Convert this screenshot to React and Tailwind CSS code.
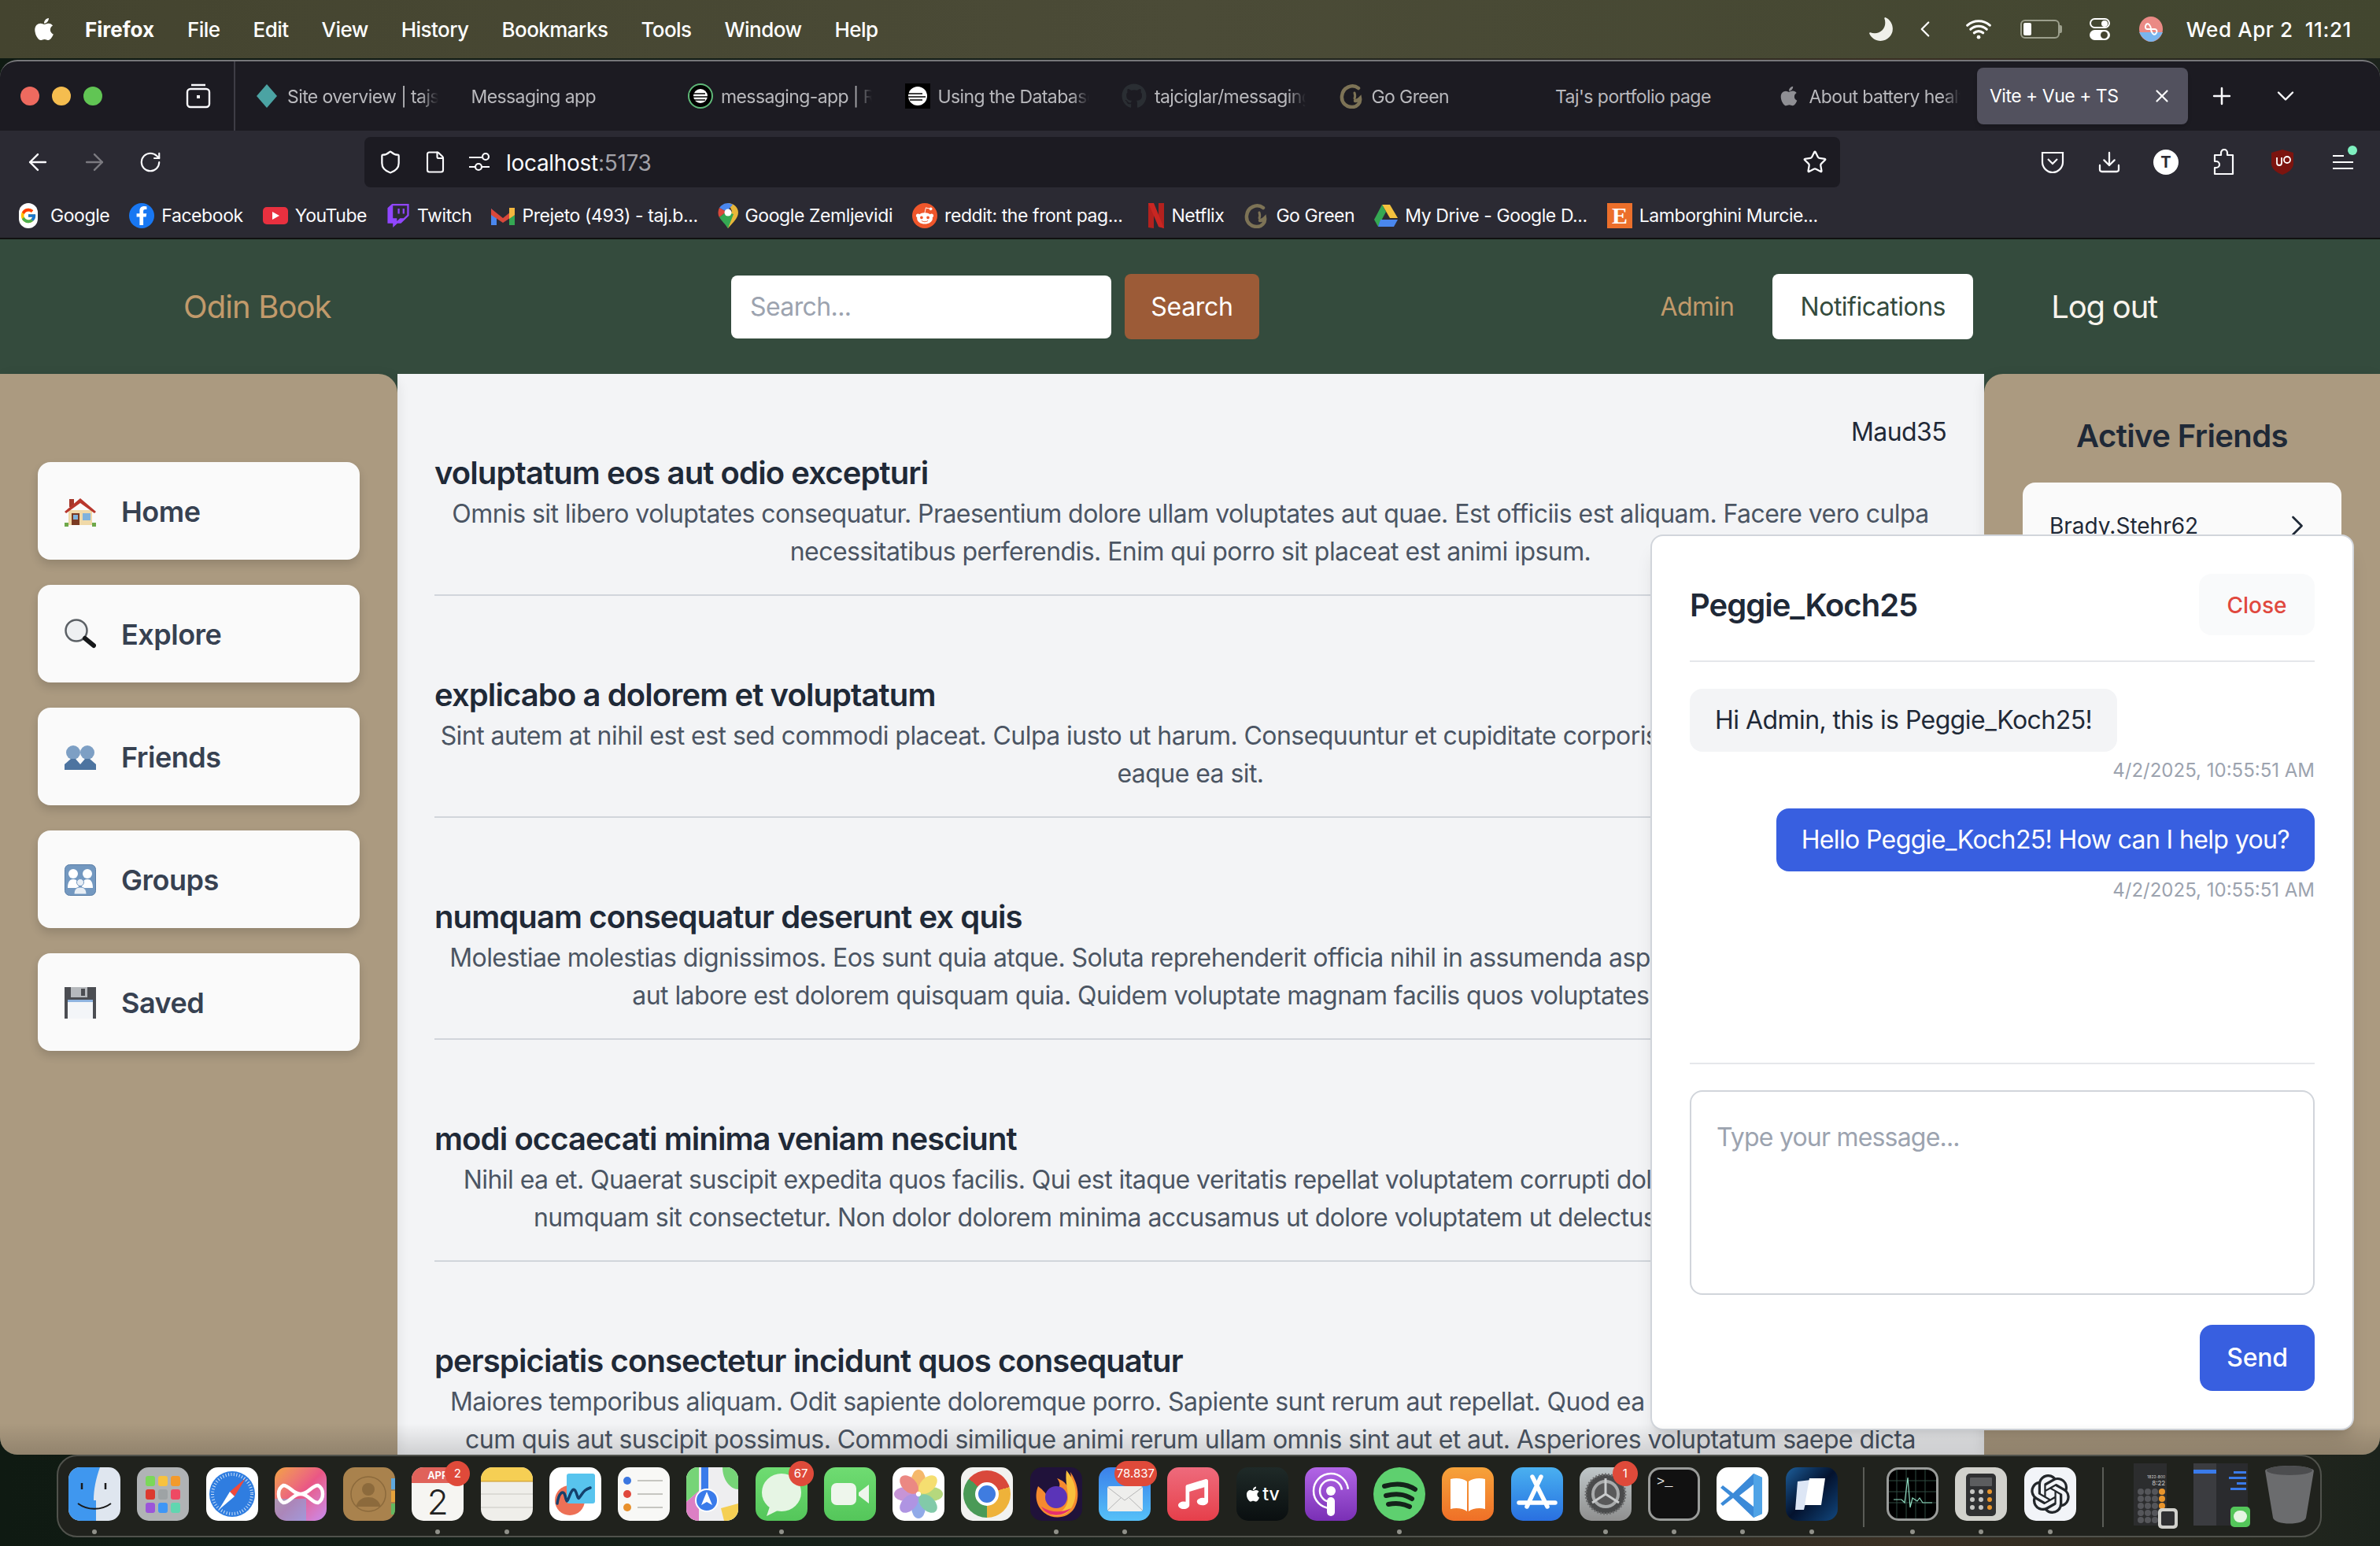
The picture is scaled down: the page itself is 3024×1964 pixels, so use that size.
import React from 'react';
import {
  ArrowLeft, ArrowRight, RotateCw, Shield, File, Star, Download, Plus, ChevronDown, ChevronLeft, ChevronRight, X,
} from 'lucide-react';
import { FaApple, FaGithub, FaFacebookF, FaRedditAlien, FaTwitch, FaMusic } from 'react-icons/fa';
import { FcGoogle } from 'react-icons/fc';
import { IoMoon, IoWifi } from 'react-icons/io5';
import { SiOpenai } from 'react-icons/si';

const menus = ['File', 'Edit', 'View', 'History', 'Bookmarks', 'Tools', 'Window', 'Help'];

const GoGreenIcon = ({ size = 32 }) => (
  <svg width={size} height={size} viewBox="0 0 32 32" fill="none">
    <path d="M25 6C17 0 5 5 4 16c-1 9 6 14 13 14 6 0 11-5 10-11-2 2-4 3-6 3" stroke="#7d7356" strokeWidth="4.5" strokeLinecap="round" />
    <path d="M20 12c1 3 1 5 0 7" stroke="#7d7356" strokeWidth="3" strokeLinecap="round" />
  </svg>
);

const StripeCircle = ({ square }) => (
  <svg width="32" height="32" viewBox="0 0 32 32">
    {square ? <rect width="32" height="32" fill="#000" /> : <circle cx="16" cy="16" r="15" fill="#000" stroke="#5fb878" strokeWidth="2" />}
    <circle cx="16" cy="16" r={square ? 12 : 9} fill="#fff" />
    <path d="M2 13h20M2 17h24M6 21h16" stroke="#000" strokeWidth="1.6" />
  </svg>
);

const tabs = [
  { title: 'Site overview | tajs-portfolio', w: 'w-[275.5px]', icon: <svg width="28" height="32" viewBox="0 0 28 32"><path d="M14 1l13 15-13 15L1 16z" fill="#4ba3a3" /></svg> },
  { title: 'Messaging app', w: 'w-[275.5px]' },
  { title: 'messaging-app | Railway', w: 'w-[275.5px]', icon: <StripeCircle /> },
  { title: 'Using the Database', w: 'w-[275.5px]', icon: <StripeCircle square /> },
  { title: 'tajciglar/messaging-app', w: 'w-[275.5px]', icon: <FaGithub size={32} color="#2a2e33" /> },
  { title: 'Go Green', w: 'w-[275.5px]', icon: <GoGreenIcon /> },
  { title: "Taj's portfolio page", w: 'w-[275.5px]', full: true },
  { title: 'About battery health', w: 'w-[260.5px] pl-[5px]', icon: <FaApple size={28} color="#8f8f94" /> },
];

const bookmarks = [
  { title: 'Google', icon: <span className="flex h-[32px] w-[31px] items-center justify-start"><span className="flex h-[32px] w-[24px] items-center justify-center rounded-full bg-white"><FcGoogle size={22} /></span></span> },
  { title: 'Facebook', icon: <span className="flex h-[32px] w-[32px] items-center justify-center rounded-full bg-[#1877f2]"><FaFacebookF size={24} color="#fff" /></span> },
  { title: 'YouTube', icon: <svg width="32" height="22" viewBox="0 0 32 22"><rect width="32" height="22" rx="5" fill="#e9303f" /><path d="M12 6l9 5-9 5z" fill="#fff" /></svg> },
  { title: 'Twitch', icon: <FaTwitch size={30} color="#9146ff" /> },
  { title: 'Prejeto (493) - taj.b...', icon: <svg width="30" height="24" viewBox="0 0 30 24"><path d="M0 3v21h7V10z" fill="#4a87ee" /><path d="M30 3v21h-7V10z" fill="#35a853" /><path d="M0 3l15 12L30 3v8L15 21 0 11z" fill="#d9483b" /><path d="M23 2l7 0v9l-7 5z" fill="#f4b73f" /></svg> },
  { title: 'Google Zemljevidi', icon: <svg width="26" height="32" viewBox="0 0 26 32"><path d="M13 0c7 0 13 5 13 12 0 4-2 7-5 11l-8 9-2-3 7-19z" fill="#e8b73a" /><path d="M13 0C8 0 4 3 2 6l9 5 8-9c-2-1-4-2-6-2z" fill="#4a87ee" /><path d="M2 6C0 10 0 15 2 18l9-7z" fill="#d9483b" /><path d="M2 18c3 5 7 8 11 14l7-18-9-3z" fill="#35a853" /><circle cx="13" cy="12" r="4.5" fill="#fff" /></svg> },
  { title: 'reddit: the front pag...', icon: <span className="flex h-[32px] w-[32px] items-center justify-center rounded-full bg-[#f0562b]"><FaRedditAlien size={24} color="#fff" /></span> },
  { title: 'Netflix', icon: <svg className="ml-[8px]" width="20" height="32" viewBox="0 0 20 32"><path d="M0 0h7v32l-7-1z" fill="#b3211e" /><path d="M13 0h7v32l-7-2z" fill="#b3211e" /><path d="M0 0h7l13 32-7-2z" fill="#c92622" /></svg> },
  { title: 'Go Green', icon: <GoGreenIcon /> },
  { title: 'My Drive - Google D...', icon: <svg width="30" height="28" viewBox="0 0 30 28"><path d="M10 0h10l10 17H20z" fill="#f4c23e" /><path d="M10 0l5 9-10 19L0 19z" fill="#35a853" /><path d="M8 19h22l-5 9H5z" fill="#4a87ee" /></svg> },
  { title: 'Lamborghini Murcie...', icon: <span className="flex h-[32px] w-[32px] items-center justify-center bg-[#ec6f2b] font-['Liberation_Serif',serif] text-[30px] leading-none font-bold text-white">E</span> },
];

const posts = [
  { title: 'voluptatum eos aut odio excepturi', lines: ['Omnis sit libero voluptates consequatur. Praesentium dolore ullam voluptates aut quae. Est officiis est aliquam. Facere vero culpa', 'necessitatibus perferendis. Enim qui porro sit placeat est animi ipsum.'] },
  { title: 'explicabo a dolorem et voluptatum', lines: ['Sint autem at nihil est est sed commodi placeat. Culpa iusto ut harum. Consequuntur et cupiditate corporis quia dolorem eum sit et.', 'eaque ea sit.'] },
  { title: 'numquam consequatur deserunt ex quis', lines: ['Molestiae molestias dignissimos. Eos sunt quia atque. Soluta reprehenderit officia nihil in assumenda aspernatur quia dolore sunt.', 'aut labore est dolorem quisquam quia. Quidem voluptate magnam facilis quos voluptates quidem.'] },
  { title: 'modi occaecati minima veniam nesciunt', lines: ['Nihil ea et. Quaerat suscipit expedita quos facilis. Qui est itaque veritatis repellat voluptatem corrupti dolorem sit ipsa dolor sint.', 'numquam sit consectetur. Non dolor dolorem minima accusamus ut dolore voluptatem ut delectus et ipsum dolore.'] },
  { title: 'perspiciatis consectetur incidunt quos consequatur', lines: ['Maiores temporibus aliquam. Odit sapiente doloremque porro. Sapiente sunt rerum aut repellat. Quod ea laudantium quia et vitae.', 'cum quis aut suscipit possimus. Commodi similique animi rerum ullam omnis sint aut et aut. Asperiores voluptatum saepe dicta'] },
];

const HouseEmoji = () => (
  <svg width="40" height="38" viewBox="0 0 40 38">
    <path d="M6 3h6v10H6z" fill="#a5382b" />
    <path d="M5 17h30v19H5z" fill="#f0d9a8" />
    <path d="M0 19L20 2l20 17-2 2L20 8 2 21z" fill="#b8372d" />
    <path d="M9 21h10v15H9z" fill="#7a3a22" />
    <path d="M11 23h6v6h-6zM23 21h10v9H23z" fill="#7fb2dc" />
    <path d="M0 33h5v5H0zM35 33h5v5h-5z" fill="#6ea84a" />
  </svg>
);
const SearchEmoji = () => (
  <svg width="40" height="40" viewBox="0 0 40 40">
    <circle cx="15" cy="15" r="13.5" fill="#eef0f2" stroke="#5c6166" strokeWidth="2.5" />
    <path d="M26 25l11 9" stroke="#16181a" strokeWidth="6" strokeLinecap="round" />
  </svg>
);
const FriendsEmoji = () => (
  <svg width="40" height="32" viewBox="0 0 40 32">
    <circle cx="11" cy="10" r="9" fill="#7d9fc4" />
    <circle cx="29" cy="10" r="9" fill="#7d9fc4" />
    <path d="M0 32v-7l8-7h6l6 7v7z" fill="#4d74a0" />
    <path d="M40 32v-7l-8-7h-6l-6 7v7z" fill="#4d74a0" />
  </svg>
);
const GroupsEmoji = () => (
  <svg width="40" height="40" viewBox="0 0 40 40">
    <rect x="0.5" y="0.5" width="39" height="39" rx="6" fill="#7398c0" stroke="#5a7ea6" />
    <circle cx="11" cy="12" r="6" fill="#fff" />
    <circle cx="29" cy="12" r="6" fill="#fff" />
    <path d="M4 30c0-8 3-11 7-11s7 3 7 11zM22 30c0-8 3-11 7-11s7 3 7 11z" fill="#fff" />
    <circle cx="20" cy="23" r="4.5" fill="#e8eef5" stroke="#7398c0" />
    <path d="M12 38c0-6 3-9 8-9s8 3 8 9z" fill="#e8eef5" stroke="#7398c0" />
  </svg>
);
const SavedEmoji = () => (
  <svg width="40" height="40" viewBox="0 0 40 40">
    <path d="M0 0h40v40H0z" fill="#4b4d52" />
    <path d="M8 0h21v13H8z" fill="#b6b9bd" />
    <path d="M21 2h5v9h-5z" fill="#4b4d52" />
    <path d="M4 16h32v24H4z" fill="#f3f5f8" />
    <path d="M4 16h32v3H4z" fill="#8fb4e0" />
  </svg>
);

const navItems = [
  { label: 'Home', icon: <HouseEmoji /> },
  { label: 'Explore', icon: <SearchEmoji /> },
  { label: 'Friends', icon: <FriendsEmoji /> },
  { label: 'Groups', icon: <GroupsEmoji /> },
  { label: 'Saved', icon: <SavedEmoji /> },
];

// one dock tile, 66x68, with optional running dot and badge
const Tile = ({ dot, badge, className = '', children }) => (
  <div className="relative h-[68px] w-[66px] shrink-0">
    <div className={`h-full w-full overflow-hidden rounded-[15px] ${className}`}>{children}</div>
    {badge && (
      <span className="absolute -top-[8px] -right-[8px] flex h-[32px] min-w-[32px] items-center justify-center rounded-full bg-[#df4a3a] px-[3px] text-[15px] text-white">
        {badge}
      </span>
    )}
    {dot && <span className="absolute top-[79px] left-[30px] h-[6px] w-[6px] rounded-full bg-[#8f9089]" />}
  </div>
);

const S = ({ children }) => <svg width="66" height="68" viewBox="0 0 66 68" fill="none">{children}</svg>;

const Dock = () => (
  <div className="absolute top-[1848px] left-[72px] flex h-[105px] w-[2878px] items-start gap-[21.27px] rounded-[26px] border-2 border-[#50524c] bg-[#20221d] pt-[14px] pl-[13px]">
    <Tile dot className="bg-[#dfe6ef]">
      <S>
        <path d="M0 0h40c-5 14-8 28-8 42h3v26H0z" fill="#3f97ef" />
        <path d="M17 20v8M47 20v8" stroke="#1a1a1a" strokeWidth="2.5" />
        <path d="M12 46c12 9 30 9 42 0" stroke="#1a1a1a" strokeWidth="2" />
      </S>
    </Tile>
    <Tile className="bg-[#b0b3b5]">
      <S>
        <rect x="11" y="11" width="12" height="13" rx="3" fill="#7bd859" /><rect x="27" y="11" width="12" height="13" rx="3" fill="#f7c23e" /><rect x="43" y="11" width="12" height="13" rx="3" fill="#f39a2b" />
        <rect x="11" y="28" width="12" height="13" rx="3" fill="#dc3a30" /><rect x="27" y="28" width="12" height="13" rx="3" fill="#9ea3a5" /><rect x="43" y="28" width="12" height="13" rx="3" fill="#ee4a63" />
        <rect x="11" y="45" width="12" height="13" rx="3" fill="#9b55d9" /><rect x="27" y="45" width="12" height="13" rx="3" fill="#3f96f5" /><rect x="43" y="45" width="12" height="13" rx="3" fill="#61d6b0" />
      </S>
    </Tile>
    <Tile className="bg-white">
      <S>
        <circle cx="33" cy="34" r="29" fill="#2f7de0" />
        <circle cx="33" cy="34" r="25" stroke="#cfe2f8" strokeWidth="4" strokeDasharray="1 2.5" />
        <path d="M50 14L36 37 30 31z" fill="#ee4a3c" />
        <path d="M16 54l14-23 6 6z" fill="#fff" />
      </S>
    </Tile>
    <Tile className="bg-linear-to-br from-[#f2a23c] via-[#ea5685] to-[#c68bf0]">
      <S>
        <rect x="0" y="40" width="40" height="28" fill="#6db6ee" opacity="0.5" />
        <path d="M22 12a12 10 0 0122 0c0 8-11 12-11 22s11 14 11 22a12 10 0 01-22 0c0-8 11-12 11-22S22 20 22 12z" transform="rotate(90 33 34)" stroke="#fff" strokeWidth="4.5" />
      </S>
    </Tile>
    <Tile className="bg-[#a9824d]">
      <S>
        <circle cx="32" cy="34" r="22" stroke="#8c6a3c" strokeWidth="1.5" />
        <circle cx="32" cy="28" r="8" fill="#8c6a3c" />
        <path d="M16 50c3-9 9-12 16-12s13 3 16 12z" fill="#8c6a3c" />
        <rect x="61" y="14" width="5" height="14" fill="#5fa8dd" /><rect x="61" y="30" width="5" height="14" fill="#e5a23b" /><rect x="61" y="46" width="5" height="14" fill="#62b860" />
      </S>
    </Tile>
    <Tile dot badge="2" className="flex flex-col bg-[#f6f5f2]">
      <div className="h-[20px] bg-[#e0625a] text-center text-[13px] leading-[20px] font-semibold text-white">APR</div>
      <div className="text-center text-[44px] leading-[48px] font-light text-[#222]">2</div>
    </Tile>
    <Tile dot className="bg-[#efeeea]">
      <S>
        <rect width="66" height="17" fill="#f6cf54" />
        <rect y="17" width="66" height="1.5" fill="#d8a93c" />
        <path d="M0 34h66M0 51h66" stroke="#d6d5d0" strokeWidth="1.5" />
      </S>
    </Tile>
    <Tile className="bg-white">
      <S>
        <circle cx="26" cy="42" r="19" fill="#ed7056" />
        <rect x="22" y="8" width="36" height="38" rx="3" fill="#58c4ee" />
        <path d="M10 46c2-14 8-18 10-10s2 10 5 2 6-14 9-6 2 10 6 4 6-8 12-10" stroke="#14406c" strokeWidth="3.5" strokeLinecap="round" />
      </S>
    </Tile>
    <Tile className="bg-[#f8f8f6]">
      <S>
        <circle cx="12" cy="17" r="5" fill="#3a76e0" /><circle cx="12" cy="34" r="5" fill="#e0483c" /><circle cx="12" cy="51" r="5" fill="#e8902c" />
        <path d="M25 17h32M25 34h32M25 51h32" stroke="#b5b5b0" strokeWidth="1.5" />
      </S>
    </Tile>
    <Tile className="bg-[#6fd26f]">
      <S>
        <path d="M0 0h66v68H0z" fill="#eeeef0" />
        <path d="M46 0h20v28C56 28 46 16 46 0z" fill="#76d477" />
        <path d="M0 0h16v30L0 44z" fill="#76d477" />
        <path d="M0 44l16-14 0 38H0z" fill="#dc7fc4" />
        <path d="M44 52l22-6v22H48z" fill="#f5cf53" />
        <path d="M19 0h9v34h-9z" fill="#3a7bea" />
        <circle cx="26" cy="42" r="14" fill="#3a7bea" stroke="#fff" strokeWidth="2" />
        <path d="M26 31l7 17-7-4-7 4z" fill="#fff" />
      </S>
    </Tile>
    <Tile dot badge="67" className="bg-linear-to-b from-[#6fdc72] to-[#54c65a]">
      <S>
        <ellipse cx="33" cy="32" rx="25" ry="24" fill="#e6f5e4" />
        <path d="M18 50l-4 12 14-7z" fill="#e6f5e4" />
      </S>
    </Tile>
    <Tile className="bg-linear-to-b from-[#6fdc72] to-[#54c65a]">
      <S>
        <rect x="9" y="20" width="32" height="28" rx="7" fill="#eef6ec" />
        <path d="M44 32l13-10v24l-13-10z" fill="#eef6ec" />
      </S>
    </Tile>
    <Tile className="bg-white">
      <S>
        <g opacity="0.75">
          <ellipse cx="33" cy="17" rx="9" ry="14" fill="#f2a13a" /><ellipse cx="33" cy="51" rx="9" ry="14" fill="#6d8ee0" /><ellipse cx="16" cy="34" rx="14" ry="9" fill="#b471c9" /><ellipse cx="50" cy="34" rx="14" ry="9" fill="#9ccb52" />
          <ellipse cx="21" cy="22" rx="9" ry="14" transform="rotate(-45 21 22)" fill="#e4605a" /><ellipse cx="45" cy="22" rx="9" ry="14" transform="rotate(45 45 22)" fill="#f2d340" /><ellipse cx="21" cy="46" rx="9" ry="14" transform="rotate(45 21 46)" fill="#9570d8" /><ellipse cx="45" cy="46" rx="9" ry="14" transform="rotate(-45 45 46)" fill="#58b98d" />
        </g>
      </S>
    </Tile>
    <Tile className="flex items-center justify-center bg-[#f2f2f0]">
      <div className="relative flex h-[60px] w-[60px] items-center justify-center rounded-full bg-[conic-gradient(from_-50deg,#d9483b_0_34%,#eeb23a_34%_64%,#4a9a57_64%_100%)]">
        <div className="h-[30px] w-[30px] rounded-full border-[4px] border-white bg-[#3f7ce0]" />
      </div>
    </Tile>
    <Tile dot className="bg-[#20123a]">
      <S>
        <path d="M10 24C6 34 6 48 18 58c12 9 30 7 38-6 7-12 6-30-5-46 2 10 0 16-3 20-2-6-8-10-14-12 5 6 4 12 0 14-5-2-12 0-14 6-3-4-5-6-10-10z" fill="#f58a2e" />
        <path d="M46 4c12 14 16 32 6 48-6 9-18 12-26 8 14 0 22-10 22-22 0-10-4-20-2-34z" fill="#f9c13c" />
        <circle cx="33" cy="38" r="14" fill="#5a34b8" />
        <path d="M14 50c8 14 28 14 38 2-12 6-26 6-38-2z" fill="#e6306e" />
      </S>
    </Tile>
    <Tile dot badge="78.837" className="bg-linear-to-b from-[#3c80ea] to-[#56c1f8]">
      <S>
        <rect x="11" y="24" width="45" height="32" rx="3" fill="#eeeeec" />
        <path d="M11 25l22 17 23-17M11 55l17-16M56 55L39 39" stroke="#b5b5b5" strokeWidth="1" />
      </S>
    </Tile>
    <Tile className="flex items-center justify-center bg-linear-to-b from-[#ee6a7c] to-[#e63e4a]">
      <FaMusic size={38} color="#fff" />
    </Tile>
    <Tile className="flex items-center justify-center gap-[1px] bg-linear-to-b from-[#1f2a28] to-[#0a0f10] text-white">
      <FaApple size={22} />
      <span className="text-[23px] leading-none font-medium">tv</span>
    </Tile>
    <Tile className="bg-linear-to-b from-[#b265e6] to-[#7a2fb5]">
      <S>
        <circle cx="33" cy="30" r="22" stroke="#fff" strokeWidth="2.5" strokeDasharray="100 38" strokeDashoffset="-35" />
        <circle cx="33" cy="30" r="14" stroke="#fff" strokeWidth="2.5" strokeDasharray="64 24" strokeDashoffset="-22" />
        <circle cx="33" cy="30" r="6" fill="#fff" />
        <rect x="28" y="38" width="10" height="24" rx="5" fill="#fff" />
      </S>
    </Tile>
    <Tile dot>
      <S>
        <ellipse cx="33" cy="34" rx="33" ry="34" fill="#5ed06f" />
        <path d="M14 24c14-4 28-3 39 4M16 36c12-3 24-2 33 4M19 47c10-2 19-1 27 3" stroke="#14231a" strokeWidth="6" strokeLinecap="round" />
      </S>
    </Tile>
    <Tile className="bg-linear-to-b from-[#f6a23a] to-[#ef6f27]">
      <S>
        <path d="M32 18c-5-4-14-5-21-3v38c7-2 16-1 21 3zM34 18c5-4 14-5 21-3v38c-7-2-16-1-21 3z" fill="#fff" />
      </S>
    </Tile>
    <Tile className="bg-linear-to-b from-[#4ab0f0] to-[#2a6fe0]">
      <S>
        <path d="M38 12L20 50M27 12l19 38M10 45h46" stroke="#fff" strokeWidth="5.5" strokeLinecap="round" />
      </S>
    </Tile>
    <Tile dot badge="1" className="bg-linear-to-b from-[#bfc7c9] to-[#8f8f8f]">
      <S>
        <circle cx="33" cy="34" r="25" fill="#4a4b4c" stroke="#6c6d6e" strokeWidth="3" strokeDasharray="2 2" />
        <circle cx="33" cy="34" r="18" fill="#a9abac" />
        <circle cx="33" cy="34" r="14" fill="#59595a" />
        <path d="M33 34V14M33 34l17 11M33 34L16 45" stroke="#c9cbcc" strokeWidth="3" />
      </S>
    </Tile>
    <Tile dot className="border-[3px] border-[#9a9c9a] bg-[#111]">
      <div className="pt-[7px] pl-[8px] font-['Liberation_Mono',monospace] text-[17px] leading-[17px] text-[#eee]">&gt;_</div>
    </Tile>
    <Tile dot className="bg-white">
      <S>
        <path d="M47 8l-26 25L8 23 5 26l12 10L5 46l3 3 13-10 26 25 11-5V13z" fill="#3b8ad8" />
        <path d="M47 8l11 5v46l-11 5z" fill="#4fa3e6" />
        <path d="M47 22L29 36l18 14z" fill="#fff" />
      </S>
    </Tile>
    <Tile dot className="bg-linear-to-br from-[#1d5f9c] via-[#04122e] to-[#12487f]">
      <S>
        <path d="M15 18l17-2-9 38H12z" fill="#dde6f5" />
        <path d="M30 14h20l-5 34H24z" fill="#fff" />
      </S>
    </Tile>
    <div className="mr-[7px] ml-[11px] h-[76px] w-[2px] shrink-0 bg-[#5a5c56]" />
    <Tile dot className="border-[3px] border-[#9a9c9a] bg-black">
      <S>
        <path d="M10 0v68M22 0v68M34 0v68M46 0v68M0 14h66M0 28h66M0 42h66" stroke="#2f4a40" strokeWidth="1" />
        <path d="M6 38h10l4 4 4-32 3 38 3-12 6 4 3-4 4 6h12" stroke="#8fdcc0" strokeWidth="1.2" />
      </S>
    </Tile>
    <Tile dot className="bg-[#d1d1cc]">
      <S>
        <rect x="14" y="8" width="38" height="54" rx="5" fill="#2f3032" />
        <rect x="19" y="13" width="28" height="11" rx="1" fill="#5c5d5f" />
        <g fill="#c5c5c2"><circle cx="22" cy="31" r="3" /><circle cx="33" cy="31" r="3" /><circle cx="22" cy="41" r="3" /><circle cx="33" cy="41" r="3" /><circle cx="22" cy="51" r="3" /><circle cx="33" cy="51" r="3" /></g>
        <g fill="#e8952c"><circle cx="44" cy="31" r="3" /><circle cx="44" cy="41" r="3" /><circle cx="44" cy="51" r="3" /></g>
      </S>
    </Tile>
    <Tile dot className="flex items-center justify-center bg-[#f2f4f8]">
      <SiOpenai size={50} color="#23272b" />
    </Tile>
    <div className="ml-[12px] h-[76px] w-[2px] shrink-0 bg-[#5a5c56]" />
    {/* minimised windows */}
    <div className="relative ml-[17px] -mt-[5px] flex h-[79px] w-[42px] shrink-0 flex-col items-end bg-[#2c2d2e] pt-[14px] pr-[2px] text-[#ccc]">
      <span className="text-[5px] leading-[6px]">1822-800</span>
      <span className="text-[8px] leading-[10px]">8:22</span>
      <div className="mt-[2px] grid grid-cols-4 gap-[1px]">
        {Array.from({ length: 20 }, (_, i) => (
          <span key={i} className={i % 4 === 3 ? 'h-[8px] w-[8px] rounded-full bg-[#e8952c]' : 'h-[8px] w-[8px] rounded-full bg-[#55565a]'} />
        ))}
      </div>
      <div className="absolute right-[-14px] bottom-[-4px] h-[26px] w-[25px] rounded-[5px] bg-[#d1d1cc] p-[4px]"><div className="h-full w-full rounded-[2px] bg-[#2f3032]" /></div>
    </div>
    <div className="relative ml-[12px] -mt-[5px] flex h-[79px] w-[69px] shrink-0 bg-[#2a2b2e]">
      <div className="w-[29px] bg-[#3b3c40] pt-[8px]"><div className="h-[5px] bg-[#3a7bea]" /></div>
      <div className="flex flex-1 flex-col items-end gap-[4px] pt-[10px] pr-[2px]">
        <span className="h-[3px] w-[16px] bg-[#3a7bea]" /><span className="h-[3px] w-[22px] bg-[#3a7bea]" /><span className="h-[3px] w-[12px] bg-[#3a7bea]" /><span className="h-[3px] w-[20px] bg-[#3a7bea]" />
      </div>
      <div className="absolute right-[-3px] bottom-[-2px] h-[26px] w-[25px] rounded-[5px] bg-[#54c65a]"><div className="mx-auto mt-[5px] h-[15px] w-[17px] rounded-full bg-[#e6f5e4]" /></div>
    </div>
    <div className="ml-[1px] -mt-[4px] shrink-0">
      <svg width="62" height="76" viewBox="0 0 62 76"><path d="M0 8C8 0 54 0 62 8L52 68c-2 10-40 10-42 0z" fill="#6b6c6e" /><ellipse cx="31" cy="8" rx="29" ry="6" fill="#4c4d4f" /></svg>
    </div>
  </div>
);

const Tab = ({ title, w, icon, full }) => (
  <div className={`flex h-[32px] shrink-0 items-center gap-[10px] ${w}`}>
    {icon && <span className="flex h-[32px] w-[32px] shrink-0 items-center justify-center">{icon}</span>}
    {full ? (
      <span className="pt-[2px] text-[23px] leading-[32px] tracking-[-0.55px] whitespace-nowrap text-[#b9b9bd]">{title}</span>
    ) : (
      <span className="w-[192px] overflow-hidden pt-[2px] text-[23px] leading-[32px] tracking-[-0.6px] whitespace-nowrap text-[#b9b9bd] [mask-image:linear-gradient(to_right,black_88%,transparent)]">
        {title}
      </span>
    )}
  </div>
);

export default function App() {
  return (
    <div className="relative h-[1964px] w-[3024px] overflow-hidden bg-[linear-gradient(90deg,#0f1a12,#16201a_40%,#2a2a22_65%,#3a3024_80%,#1c231c)] font-[Inter,sans-serif]">
      {/* macOS menu bar */}
      <div className="flex h-[74px] items-center bg-[linear-gradient(90deg,#44442f,#4b4b37_50%,#42462f)] pr-[36px] pl-[40px] text-[26px] text-white">
        <FaApple size={32} />
        <span className="ml-[36px] font-bold">Firefox</span>
        <div className="ml-[42px] flex gap-[42px] font-medium tracking-[-0.55px]">
          {menus.map((m) => <span key={m}>{m}</span>)}
        </div>
        <div className="ml-auto flex items-center">
          <IoMoon size={34} color="#f0f0ea" className="scale-x-[-1]" />
          <ChevronLeft size={34} strokeWidth={1.6} className="ml-[22px]" />
          <IoWifi size={38} className="ml-[32px]" />
          <div className="relative ml-[34px] flex h-[24px] w-[50px] items-center rounded-[6px] border-2 border-[#9c9f8c] p-[2px]">
            <div className="h-full w-[10px] rounded-[2px] bg-white" />
            <span className="absolute top-[5px] -right-[5px] h-[10px] w-[3px] rounded-r-[2px] bg-[#9c9f8c]" />
          </div>
          <div className="ml-[38px] flex flex-col gap-[2px]">
            <div className="flex h-[13px] w-[26px] items-center justify-end rounded-full border-2 border-white pr-[1px]"><span className="h-[8px] w-[8px] rounded-full bg-white" /></div>
            <div className="flex h-[13px] w-[26px] items-center rounded-full bg-white pl-[14px]"><span className="h-[9px] w-[9px] rounded-full bg-[#44442f]" /></div>
          </div>
          <svg className="ml-[37px]" width="30" height="32" viewBox="0 0 30 32" fill="none">
            <ellipse cx="15" cy="16" rx="15" ry="16" fill="#ea8a85" />
            <path d="M0 20c4 8 10 12 15 12s11-4 15-12z" fill="#79b5ee" />
            <path d="M9 10c3-3 6 3 6 6s3 9 6 6c3-3 1-6-1-6s-8 0-10 0-3-3-1-6z" stroke="#fff" strokeWidth="2" />
          </svg>
          <span className="ml-[30px] font-medium tracking-[0.6px] whitespace-pre">Wed Apr 2  11:21</span>
        </div>
      </div>

      {/* Firefox window */}
      <div className="mt-[2px] flex h-[1772px] flex-col overflow-hidden rounded-[22px] border-t-2 border-[#77777a] bg-[#1c1b22]">
        <div className="flex h-[88px] shrink-0 items-center pl-[26px]">
          <div className="flex gap-[16px]">
            <span className="h-[24px] w-[24px] rounded-full bg-[#ee6a5f]" />
            <span className="h-[24px] w-[24px] rounded-full bg-[#f5bd4f]" />
            <span className="h-[24px] w-[24px] rounded-full bg-[#61c554]" />
          </div>
          <svg className="ml-[106px]" width="32" height="32" viewBox="0 0 32 32" fill="none" stroke="#fbfbfe" strokeWidth="2.4"><rect x="2" y="7" width="28" height="23" rx="4" /><path d="M7 2h18" /><rect x="14" y="15" width="4" height="4" fill="#fbfbfe" stroke="none" /></svg>
          <span className="ml-[29px] h-full w-[2px] bg-[#3e3d46]" />
          <div className="ml-[24px] flex items-center">
            {tabs.map((t) => <Tab key={t.title} {...t} />)}
          </div>
          <div className="flex h-[72px] w-[268px] items-center rounded-[8px] bg-[#52515e] pr-[20px] pl-[16px] text-[23px] tracking-[-0.5px] text-white shadow-md">
            <span>Vite + Vue + TS</span>
            <X size={26} strokeWidth={2} className="ml-auto" />
          </div>
          <Plus size={34} strokeWidth={1.8} color="#fbfbfe" className="ml-[26px]" />
          <ChevronDown size={36} strokeWidth={1.6} color="#fbfbfe" className="ml-[46px]" />
        </div>

        {/* toolbar */}
        <div className="flex h-[72px] shrink-0 items-center bg-[#2b2a33] pt-[8px] text-[#fbfbfe]">
          <ArrowLeft size={34} strokeWidth={1.7} className="ml-[31px]" />
          <ArrowRight size={34} strokeWidth={1.7} className="ml-[38px] text-[#7b7a80]" />
          <RotateCw size={30} strokeWidth={1.7} className="ml-[39px]" />
          <div className="ml-[257px] flex h-[64px] w-[1875px] items-center rounded-[8px] bg-[#1c1b22] pr-[16px] pl-[17px]">
            <Shield size={32} strokeWidth={1.7} />
            <File size={30} strokeWidth={1.7} className="ml-[26px]" />
            {/* site permissions icon: two sliders */}
            <svg className="ml-[26px]" width="30" height="30" viewBox="0 0 30 30" fill="none" stroke="#fbfbfe" strokeWidth="2.2">
              <path d="M2 9h16M2 21h8M18 21h10" />
              <circle cx="23" cy="8" r="4" /><circle cx="14" cy="21" r="4" />
            </svg>
            <span className="ml-[19px] pt-[2px] text-[28px] tracking-[-0.3px]">localhost<span className="text-[#a3a2a8]">:5173</span></span>
            <Star size={32} strokeWidth={1.7} className="ml-auto" />
          </div>
          <svg className="ml-[255px]" width="30" height="32" viewBox="0 0 30 32" fill="none" stroke="#fbfbfe" strokeWidth="2.2"><path d="M2 4h26v12c0 7-6 13-13 13S2 23 2 16z" /><path d="M9 12l6 6 6-6" /></svg>
          <Download size={32} strokeWidth={1.7} className="ml-[41px]" />
          <span className="ml-[40px] flex h-[32px] w-[32px] items-center justify-center rounded-full bg-white text-[20px] font-bold text-[#2b2a33]">T</span>
          {/* extensions puzzle piece */}
          <svg className="ml-[43px]" width="28" height="34" viewBox="0 0 28 34" fill="none" stroke="#fbfbfe" strokeWidth="2.2" strokeLinejoin="round">
            <path d="M11 8V5a4 4 0 018 0v3h7v24H3v-8h2a4 4 0 000-8H3V8z" />
          </svg>
          <svg className="ml-[46px]" width="30" height="32" viewBox="0 0 30 32"><path d="M15 0l14 4v14c0 7-8 12-14 14C9 30 1 25 1 18V4z" fill="#7c140f" /><path d="M8 10v7c0 4 6 4 6 0v-7M17 13a4 4 0 108 0 4 4 0 10-8 0" stroke="#fff" strokeWidth="1.8" fill="none" /></svg>
          <div className="relative ml-[49px] flex w-[26px] flex-col gap-[6px]">
            <span className="h-[2px] w-[14px] bg-white" /><span className="h-[2px] bg-white" /><span className="h-[2px] bg-white" />
            <span className="absolute -top-[12px] -right-[5px] h-[12px] w-[12px] rounded-full bg-[#7ff0c0]" />
          </div>
        </div>

        {/* bookmarks */}
        <div className="flex h-[66px] shrink-0 items-center gap-[25px] border-b-2 border-[#111] bg-[#2b2a33] pt-[8px] pl-[24px] text-[23px] tracking-[-0.42px] text-[#fbfbfe]">
          {bookmarks.map((b, i) => (
            <div key={i} className="flex items-center gap-[9px] whitespace-nowrap">
              {b.icon}
              <span>{b.title}</span>
            </div>
          ))}
        </div>

        {/* Odin Book page */}
        <div className="relative flex flex-1 flex-col overflow-hidden bg-[#344b3d]">
          <header className="flex h-[171px] shrink-0 items-center pr-[283px] pl-[233px]">
            <span className="w-[696px] text-[40px] tracking-[-0.9px] text-[#c19a6b]">Odin Book</span>
            <input
              readOnly
              placeholder="Search..."
              className="h-[80px] w-[483px] rounded-[8px] bg-white px-[24px] text-[32px] tracking-[-0.6px] outline-none placeholder:text-[#9ca3af]"
            />
            <button className="ml-[17px] h-[83px] w-[171px] rounded-[8px] bg-[#9c5b37] text-[32px] tracking-[-0.3px] text-white">Search</button>
            <span className="ml-auto text-[32px] tracking-[-0.5px] text-[#c19a6b]">Admin</span>
            <button className="ml-[49px] h-[83px] w-[255px] rounded-[8px] bg-white text-[32px] tracking-[-0.5px] text-[#344b3d]">Notifications</button>
            <span className="ml-[99px] text-[40px] tracking-[-1.2px] text-[#f7f3ec]">Log out</span>
          </header>

          <div className="flex min-h-0 flex-1">
            <aside className="relative flex w-[505px] shrink-0 flex-col gap-[32px] rounded-tr-[24px] bg-[#ab9a80] px-[48px] pt-[112px] shadow-[4px_0_14px_rgba(0,0,0,0.06)]">
              {navItems.map((item) => (
                <div key={item.label} className="flex h-[124px] items-center gap-[32px] rounded-[16px] bg-[#fafafa] pt-[2px] pl-[34px] text-[36px] font-semibold tracking-[-0.5px] text-[#374151] shadow-[0_6px_12px_rgba(0,0,0,0.14)]">
                  <span className="flex w-[40px] justify-center">{item.icon}</span>
                  {item.label}
                </div>
              ))}
            </aside>

            <main className="min-w-0 flex-1 overflow-hidden bg-[#f3f4f6] pt-[50px] pr-[48px] pl-[47px]">
              <p className="text-right text-[32px] leading-[48px] tracking-[-0.6px] text-[#1f2937]">Maud35</p>
              {posts.map((post) => (
                <article key={post.title} className="mb-[98px] border-b-2 border-[#d1d5db] pb-[30px]">
                  <h2 className="text-[40px] leading-[56px] font-semibold tracking-[-0.9px] text-[#1f2937]">{post.title}</h2>
                  {post.lines.map((line) => (
                    <p key={line} className="text-center text-[32px] leading-[48px] tracking-[-0.56px] whitespace-nowrap text-[#4b5563]">{line}</p>
                  ))}
                </article>
              ))}
            </main>

            <aside className="relative w-[503px] shrink-0 rounded-tl-[24px] bg-[#ab9a80] px-[49px] pt-[51px] shadow-[-4px_0_14px_rgba(0,0,0,0.06)]">
              <h2 className="text-center text-[40px] leading-[56px] font-semibold tracking-[-0.6px] text-[#1f2937]">Active Friends</h2>
              <div className="mt-[31px] flex h-[110px] items-center justify-between rounded-[16px] bg-[#fafafa] pr-[34px] pl-[34px] text-[28px] text-[#1f2937]">
                Brady.Stehr62
                <ChevronRight size={44} strokeWidth={1.5} />
              </div>
            </aside>
          </div>

          {/* chat popup */}
          <div className="absolute right-[33px] bottom-[31px] flex h-[1138px] w-[894px] flex-col rounded-[16px] border-2 border-[#d1d5db] bg-white px-[48px] pt-[48px] pb-[48px] shadow-xl">
            <div className="flex items-center justify-between border-b-2 border-[#e5e7eb] pb-[32px]">
              <h3 className="pt-[2px] text-[40px] font-semibold tracking-[-1px] text-[#1f2937]">Peggie_Koch25</h3>
              <button className="h-[78px] w-[147px] rounded-[16px] bg-[#f9fafb] pt-[2px] text-[28px] font-medium text-[#e0483e]">Close</button>
            </div>
            <div className="flex flex-1 flex-col pt-[34px]">
              <div className="w-fit rounded-[16px] bg-[#f3f4f6] px-[32px] py-[16px] text-[32px] leading-[48px] tracking-[-0.55px] text-[#1f2937]">Hi Admin, this is Peggie_Koch25!</div>
              <p className="mt-[8px] text-right text-[24px] leading-[32px] text-[#9ca3af]">4/2/2025, 10:55:51 AM</p>
              <div className="mt-[32px] w-fit self-end rounded-[16px] bg-[#385fe0] px-[32px] py-[16px] text-[32px] leading-[48px] tracking-[-0.63px] text-white">Hello Peggie_Koch25! How can I help you?</div>
              <p className="mt-[8px] text-right text-[24px] leading-[32px] text-[#9ca3af]">4/2/2025, 10:55:51 AM</p>
            </div>
            <div className="border-t-2 border-[#e5e7eb] pt-[33px]">
              <textarea
                readOnly
                placeholder="Type your message..."
                className="block h-[260px] w-full resize-none rounded-[16px] border-2 border-[#d1d5db] px-[32px] py-[40px] text-[32px] leading-[36px] tracking-[-0.8px] outline-none placeholder:text-[#9ca3af]"
              />
              <div className="mt-[38px] flex justify-end">
                <button className="h-[84px] w-[146px] rounded-[16px] bg-[#385fe0] text-[32px] font-medium tracking-[-0.3px] text-white">Send</button>
              </div>
            </div>
          </div>

          {/* dock shading at window bottom */}
          <div className="pointer-events-none absolute right-0 bottom-0 left-0 h-[40px] bg-linear-to-b from-transparent to-black/15" />
        </div>
      </div>

      <Dock />
    </div>
  );
}
